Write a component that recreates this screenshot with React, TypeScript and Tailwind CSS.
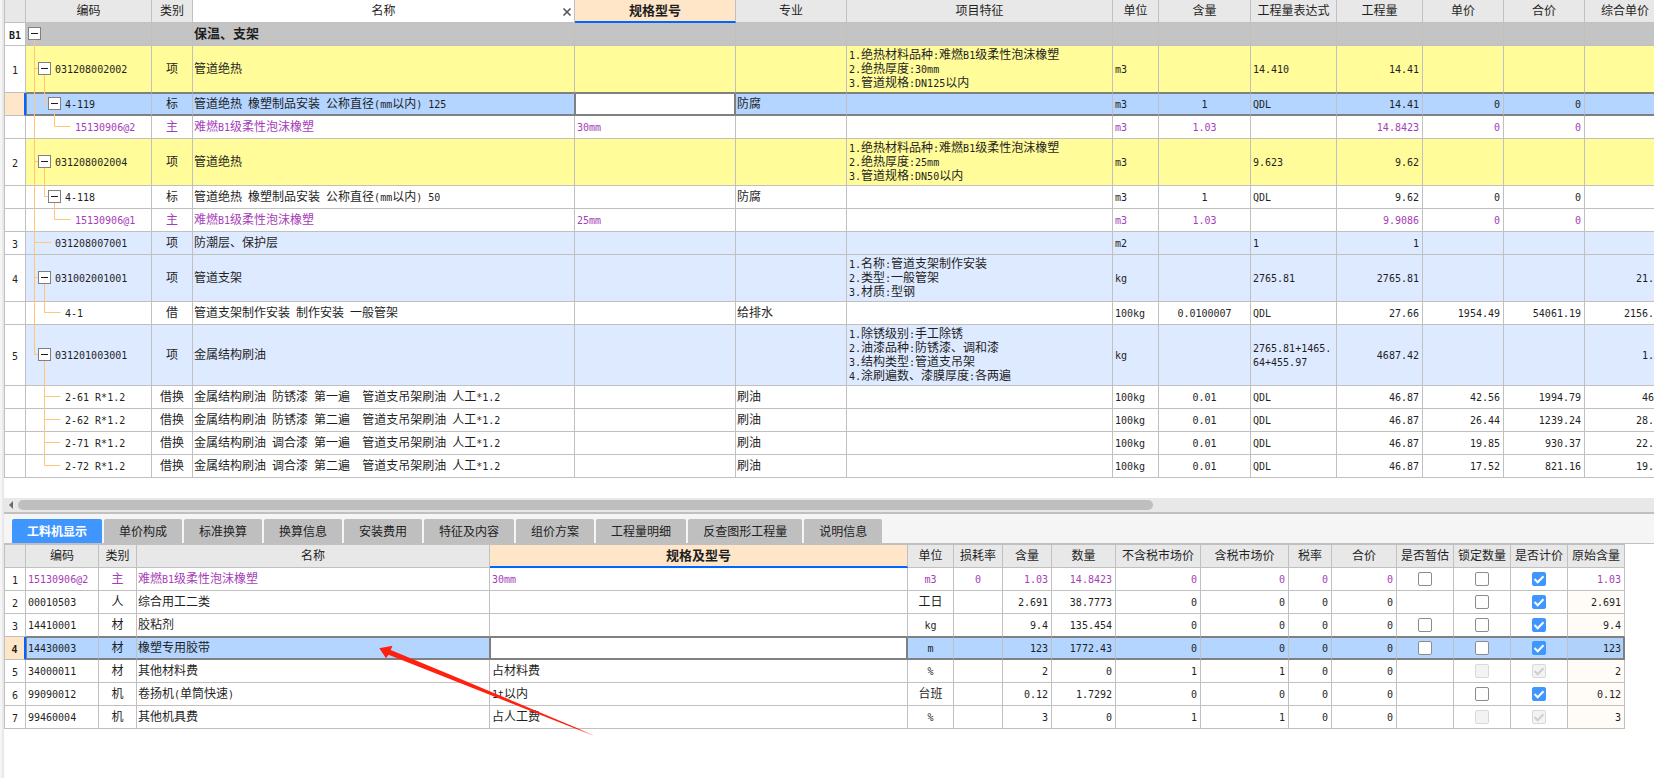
import { ReactNode, useState } from "react";

const HAN = "font-['Noto_Sans_CJK_SC',sans-serif]";
const LATIN = "font-['DejaVu_Sans_Mono','Noto_Sans_CJK_SC',monospace] text-[10px] leading-none";

/** Sets Latin runs in a half-width face next to full-width Han characters. */
function Mixed({ text }: { text: string }) {
  return (
    <>
      {text.split(/([\x20-\x7e]+)/).map((part, i) =>
        i % 2 === 1 ? (
          <span key={i} className={LATIN}>
            {part}
          </span>
        ) : (
          part
        ),
      )}
    </>
  );
}

type Tone = "section" | "yellow" | "blue" | "plain" | "selected";

interface Item {
  no: string;
  tone: Tone;
  level: 0 | 1 | 2 | 3;
  open?: boolean;
  /** Vertical connectors that pass through or end in this row. */
  through?: number[];
  last?: boolean;
  code: string;
  kind: string;
  name: string;
  spec?: string;
  trade?: string;
  feature?: string[];
  unit?: string;
  content?: string;
  expr?: string[];
  qty?: string;
  price?: string;
  total?: string;
  full?: string;
  material?: boolean;
}

const ITEMS: Item[] = [
  { no: "B1", tone: "section", level: 0, open: true, code: "", kind: "", name: "保温、支架" },
  {
    no: "1", tone: "yellow", level: 1, open: true, code: "031208002002", kind: "项", name: "管道绝热",
    feature: ["1.绝热材料品种:难燃B1级柔性泡沫橡塑", "2.绝热厚度:30mm", "3.管道规格:DN125以内"],
    unit: "m3", expr: ["14.410"], qty: "14.41",
  },
  {
    no: "", tone: "selected", level: 2, open: true, last: true, through: [0], code: "4-119", kind: "标",
    name: "管道绝热 橡塑制品安装 公称直径(mm以内) 125", trade: "防腐", unit: "m3", content: "1", expr: ["QDL"],
    qty: "14.41", price: "0", total: "0",
  },
  {
    no: "", tone: "plain", level: 3, last: true, through: [0], code: "15130906@2", kind: "主", name: "难燃B1级柔性泡沫橡塑",
    spec: "30mm", unit: "m3", content: "1.03", qty: "14.8423", price: "0", total: "0", material: true,
  },
  {
    no: "2", tone: "yellow", level: 1, open: true, code: "031208002004", kind: "项", name: "管道绝热",
    feature: ["1.绝热材料品种:难燃B1级柔性泡沫橡塑", "2.绝热厚度:25mm", "3.管道规格:DN50以内"],
    unit: "m3", expr: ["9.623"], qty: "9.62",
  },
  {
    no: "", tone: "plain", level: 2, open: true, last: true, through: [0], code: "4-118", kind: "标",
    name: "管道绝热 橡塑制品安装 公称直径(mm以内) 50", trade: "防腐", unit: "m3", content: "1", expr: ["QDL"],
    qty: "9.62", price: "0", total: "0",
  },
  {
    no: "", tone: "plain", level: 3, last: true, through: [0], code: "15130906@1", kind: "主", name: "难燃B1级柔性泡沫橡塑",
    spec: "25mm", unit: "m3", content: "1.03", qty: "9.9086", price: "0", total: "0", material: true,
  },
  { no: "3", tone: "blue", level: 1, code: "031208007001", kind: "项", name: "防潮层、保护层", unit: "m2", expr: ["1"], qty: "1" },
  {
    no: "4", tone: "blue", level: 1, open: true, code: "031002001001", kind: "项", name: "管道支架",
    feature: ["1.名称:管道支架制作安装", "2.类型:一般管架", "3.材质:型钢"],
    unit: "kg", expr: ["2765.81"], qty: "2765.81", full: "21.",
  },
  {
    no: "", tone: "plain", level: 2, last: true, through: [0], code: "4-1", kind: "借", name: "管道支架制作安装 制作安装 一般管架",
    trade: "给排水", unit: "100kg", content: "0.0100007", expr: ["QDL"], qty: "27.66", price: "1954.49", total: "54061.19", full: "2156.",
  },
  {
    no: "5", tone: "blue", level: 1, open: true, last: true, code: "031201003001", kind: "项", name: "金属结构刷油",
    feature: ["1.除锈级别:手工除锈", "2.油漆品种:防锈漆、调和漆", "3.结构类型:管道支吊架", "4.涂刷遍数、漆膜厚度:各两遍"],
    unit: "kg", expr: ["2765.81+1465.", "64+455.97"], qty: "4687.42", full: "1.",
  },
  {
    no: "", tone: "plain", level: 2, code: "2-61 R*1.2", kind: "借换", name: "金属结构刷油 防锈漆 第一遍  管道支吊架刷油 人工*1.2",
    trade: "刷油", unit: "100kg", content: "0.01", expr: ["QDL"], qty: "46.87", price: "42.56", total: "1994.79", full: "46",
  },
  {
    no: "", tone: "plain", level: 2, code: "2-62 R*1.2", kind: "借换", name: "金属结构刷油 防锈漆 第二遍  管道支吊架刷油 人工*1.2",
    trade: "刷油", unit: "100kg", content: "0.01", expr: ["QDL"], qty: "46.87", price: "26.44", total: "1239.24", full: "28.",
  },
  {
    no: "", tone: "plain", level: 2, code: "2-71 R*1.2", kind: "借换", name: "金属结构刷油 调合漆 第一遍  管道支吊架刷油 人工*1.2",
    trade: "刷油", unit: "100kg", content: "0.01", expr: ["QDL"], qty: "46.87", price: "19.85", total: "930.37", full: "22.",
  },
  {
    no: "", tone: "plain", level: 2, last: true, code: "2-72 R*1.2", kind: "借换", name: "金属结构刷油 调合漆 第二遍  管道支吊架刷油 人工*1.2",
    trade: "刷油", unit: "100kg", content: "0.01", expr: ["QDL"], qty: "46.87", price: "17.52", total: "821.16", full: "19.",
  },
];

const TONES: Record<Tone, string> = {
  section: "bg-[#c4c4c4] font-bold",
  yellow: "bg-[#fffc99]",
  blue: "bg-[#deeaff]",
  plain: "bg-white",
  selected: "bg-[#b3d5ff]",
};

const INDENT = ["pl-[2px]", "pl-[12px]", "pl-[22px]", "pl-[32px]"];
const LEAF_INDENT = ["pl-[2px]", "pl-[29px]", "pl-[39px]", "pl-[49px]"];

function TreeLines({ item, height }: { item: Item; height: number }) {
  const mid = Math.floor((height - 2) / 2) + 0.5;
  const x = item.level * 10 - 2 + 0.5;
  return (
    <svg
      className={`pointer-events-none absolute ${item.tone === "selected" ? "-left-px -top-px" : "left-0 top-0"}`}
      width="60"
      height={height}
      stroke="#ffc67a"
      fill="none"
      aria-hidden="true"
    >
      {item.through?.map((t) => (
        <path key={t} d={`M${t * 10 + 8.5} 0V${height}`} />
      ))}
      {item.level > 0 && <path d={`M${x} 0V${item.last ? mid : height}M${x} ${mid}h${item.open ? 4 : 16}`} />}
      {item.open && <path d={`M${x + 10} ${mid}V${height}`} />}
    </svg>
  );
}

function TreeCell({ item }: { item: Item }) {
  const lines = item.feature?.length ?? 1;
  const height = lines === 4 ? 61 : lines === 3 ? 47 : 23;
  return (
    <div
      className={`flex items-center whitespace-pre ${item.open ? INDENT[item.level] : LEAF_INDENT[item.level]} ${
        item.tone === "selected" ? "-ml-px" : ""
      }`}
    >
      <TreeLines item={item} height={height} />
      {item.open && (
        <button type="button" aria-label="折叠" className="relative mr-[4px] size-[13px] shrink-0 border border-[#808080] bg-white">
          <svg viewBox="0 0 11 11" className="block size-[11px]" aria-hidden="true">
            <path d="M2 5h7v1H2z" fill="#1f1f1f" />
          </svg>
        </button>
      )}
      <span>
        <Mixed text={item.code} />
      </span>
    </div>
  );
}

const EDGE = "border-r border-[#c0c0c0]";
const HEAD = "border-r border-b border-[#c0c0c0] bg-[#e8e8e8] p-0 pb-[2px] text-center font-normal";
const HEAD_ACTIVE = "border-r border-b-2 border-r-[#c0c0c0] border-b-[#0066ff] bg-[#ffe6c8] p-0 pb-[2px] text-center text-[13px] font-bold";

function edges(selected: boolean, beforeSelected: boolean) {
  if (selected) return "border-t border-b-2 border-y-[#808080]";
  return beforeSelected ? "border-b border-b-[#808080]" : "border-b border-b-[#c0c0c0]";
}

function QuotaTable() {
  return (
    <table className="w-full table-fixed border-separate border-spacing-0 border-l border-[#c0c0c0]">
      <colgroup>
        <col className="w-[21px]" />
        <col className="w-[126px]" />
        <col className="w-[41px]" />
        <col className="w-[382px]" />
        <col className="w-[161px]" />
        <col className="w-[111px]" />
        <col className="w-[266px]" />
        <col className="w-[46px]" />
        <col className="w-[92px]" />
        <col className="w-[86px]" />
        <col className="w-[86px]" />
        <col className="w-[81px]" />
        <col className="w-[81px]" />
        <col />
      </colgroup>
      <thead>
        <tr className="h-[23px]">
          <th className={HEAD} aria-label="序号" />
          <th className={HEAD}>编码</th>
          <th className={HEAD}>类别</th>
          <th className="relative border-r border-b border-[#c0c0c0] bg-white p-0 pb-[2px] text-center font-normal">
            名称
            <button type="button" aria-label="清除" className="absolute right-[2px] top-[7px] size-[10px]">
              <svg viewBox="0 0 10 10" className="block" stroke="#555" strokeWidth="1.6" aria-hidden="true">
                <path d="M1.5 1.5l7 7M8.500 1.500l-7 7" />
              </svg>
            </button>
          </th>
          <th className={HEAD_ACTIVE}>规格型号</th>
          <th className={HEAD}>专业</th>
          <th className={HEAD}>项目特征</th>
          <th className={HEAD}>单位</th>
          <th className={HEAD}>含量</th>
          <th className={HEAD}>工程量表达式</th>
          <th className={HEAD}>工程量</th>
          <th className={HEAD}>单价</th>
          <th className={HEAD}>合价</th>
          <th className="border-b border-[#c0c0c0] bg-[#e8e8e8] p-0 pb-[2px] pl-4 text-left font-normal">综合单价</th>
        </tr>
      </thead>
      <tbody>
        {ITEMS.map((item, i) => {
          const sel = item.tone === "selected";
          const y = edges(sel, ITEMS[i + 1]?.tone === "selected");
          const base = `${EDGE} ${y} p-0 pb-[2px]`;
          const lines = item.feature?.length ?? 1;
          const h = lines === 4 ? "h-[61px]" : lines === 3 ? "h-[47px]" : "h-[23px]";
          return (
            <tr key={i} className={`${h} ${TONES[item.tone]} ${item.material ? "text-[#a63db8]" : ""}`}>
              <th
                scope="row"
                className={`border-b border-b-[#c0c0c0] p-0 text-center ${
                  sel ? "border-r-2 border-r-[#0066ff] bg-[#ffe6c8]" : "border-r border-r-[#c0c0c0] bg-white"
                } ${item.tone === "section" ? "font-bold" : "font-normal"}`}
              >
                <Mixed text={item.no} />
              </th>
              <td className={`${base} relative ${sel ? "border-l border-l-[#808080]" : ""}`}>
                <TreeCell item={item} />
              </td>
              <td className={`${base} text-center`}>{item.kind}</td>
              <td className={`${base} whitespace-pre pl-px ${item.tone === "section" ? "text-[13px]" : ""} ${sel ? "border-r-[#808080]" : ""}`}>
                <Mixed text={item.name} />
              </td>
              {sel ? (
                <td className={`${y} border-l border-r-2 border-x-[#808080] bg-white p-0`}>
                  <input aria-label="规格型号" className="block h-[20px] w-full bg-white px-[2px] outline-none" />
                </td>
              ) : (
                <td className={`${base} pl-[2px]`}>
                  <Mixed text={item.spec ?? ""} />
                </td>
              )}
              <td className={`${base} pl-px`}>{item.trade}</td>
              <td className={`${base} pl-[2px]`}>
                {item.feature?.map((f) => (
                  <div key={f} className="h-[14px] leading-[14px]">
                    <Mixed text={f} />
                  </div>
                ))}
              </td>
              <td className={`${base} pl-[2px]`}>
                <Mixed text={item.unit ?? ""} />
              </td>
              <td className={`${base} text-center`}>
                <Mixed text={item.content ?? ""} />
              </td>
              <td className={`${base} pl-[2px]`}>
                {item.expr?.map((e) => (
                  <div key={e} className="h-[14px] leading-[14px]">
                    <Mixed text={e} />
                  </div>
                ))}
              </td>
              <td className={`${base} pr-[3px] text-right`}>
                <Mixed text={item.qty ?? ""} />
              </td>
              <td className={`${base} pr-[3px] text-right`}>
                <Mixed text={item.price ?? ""} />
              </td>
              <td className={`${base} pr-[3px] text-right`}>
                <Mixed text={item.total ?? ""} />
              </td>
              <td className={`${y} p-0 pb-[2px] text-right`}>
                <Mixed text={item.full ?? ""} />
              </td>
            </tr>
          );
        })}
      </tbody>
    </table>
  );
}

type Tick = "none" | "off" | "on" | "off-locked" | "on-locked";

function Check({ state, label }: { state: Tick; label: string }) {
  const [on, setOn] = useState(state.startsWith("on"));
  if (state === "none") return null;
  const locked = state.endsWith("locked");
  return (
    <label className="mx-auto grid size-[14px]">
      <input
        type="checkbox"
        aria-label={label}
        checked={on}
        disabled={locked}
        onChange={(e) => setOn(e.target.checked)}
        className="col-start-1 row-start-1 m-0 size-[14px] appearance-none rounded-[2px] border border-[#8c8c8c] bg-white checked:border-[#4096ff] checked:bg-[#4096ff] disabled:border-[#d9d9d9] disabled:bg-[#f3f3f3]"
      />
      {on && (
        <svg
          viewBox="0 0 14 14"
          className={`pointer-events-none z-10 col-start-1 row-start-1 size-[14px] ${locked ? "text-[#cfcfcf]" : "text-white"}`}
          fill="none"
          stroke="currentColor"
          strokeWidth="2"
          aria-hidden="true"
        >
          <path d="M2.500 7l3.200 3.200L11.500 4.200" />
        </svg>
      )}
    </label>
  );
}

interface Resource {
  code: string;
  kind: string;
  name: string;
  spec: string;
  unit: string;
  loss: string;
  nums: string[];
  ticks: [Tick, Tick, Tick];
  origin: string;
}

const RESOURCES: Resource[] = [
  { code: "15130906@2", kind: "主", name: "难燃B1级柔性泡沫橡塑", spec: "30mm", unit: "m3", loss: "0", nums: ["1.03", "14.8423", "0", "0", "0", "0"], ticks: ["off", "off", "on"], origin: "1.03" },
  { code: "00010503", kind: "人", name: "综合用工二类", spec: "", unit: "工日", loss: "", nums: ["2.691", "38.7773", "0", "0", "0", "0"], ticks: ["none", "off", "on"], origin: "2.691" },
  { code: "14410001", kind: "材", name: "胶粘剂", spec: "", unit: "kg", loss: "", nums: ["9.4", "135.454", "0", "0", "0", "0"], ticks: ["off", "off", "on"], origin: "9.4" },
  { code: "14430003", kind: "材", name: "橡塑专用胶带", spec: "", unit: "m", loss: "", nums: ["123", "1772.43", "0", "0", "0", "0"], ticks: ["off", "off", "on"], origin: "123" },
  { code: "34000011", kind: "材", name: "其他材料费", spec: "占材料费", unit: "%", loss: "", nums: ["2", "0", "1", "1", "0", "0"], ticks: ["none", "off-locked", "on-locked"], origin: "2" },
  { code: "99090012", kind: "机", name: "卷扬机(单筒快速)", spec: "1t以内", unit: "台班", loss: "", nums: ["0.12", "1.7292", "0", "0", "0", "0"], ticks: ["none", "off", "on"], origin: "0.12" },
  { code: "99460004", kind: "机", name: "其他机具费", spec: "占人工费", unit: "%", loss: "", nums: ["3", "0", "1", "1", "0", "0"], ticks: ["none", "off-locked", "on-locked"], origin: "3" },
];

const SELECTED_RESOURCE = 3;
const TICK_LABELS = ["是否暂估", "锁定数量", "是否计价"];

function Head({ children }: { children: ReactNode }) {
  return <th className={`${HEAD} whitespace-nowrap`}>{children}</th>;
}

function ResourceTable() {
  return (
    <table className="w-full table-fixed border-separate border-spacing-0 border-l border-t border-[#c0c0c0]">
      <colgroup>
        <col className="w-[21px]" />
        <col className="w-[73px]" />
        <col className="w-[38px]" />
        <col className="w-[353px]" />
        <col />
        <col className="w-[46px]" />
        <col className="w-[49px]" />
        <col className="w-[49px]" />
        <col className="w-[64px]" />
        <col className="w-[85px]" />
        <col className="w-[88px]" />
        <col className="w-[43px]" />
        <col className="w-[65px]" />
        <col className="w-[57px]" />
        <col className="w-[57px]" />
        <col className="w-[57px]" />
        <col className="w-[57px]" />
      </colgroup>
      <thead>
        <tr className="h-[23px]">
          <th className={HEAD} aria-label="序号" />
          <Head>编码</Head>
          <Head>类别</Head>
          <Head>名称</Head>
          <th className={HEAD_ACTIVE}>规格及型号</th>
          <Head>单位</Head>
          <Head>损耗率</Head>
          <Head>含量</Head>
          <Head>数量</Head>
          <Head>不含税市场价</Head>
          <Head>含税市场价</Head>
          <Head>税率</Head>
          <Head>合价</Head>
          {TICK_LABELS.map((l) => (
            <Head key={l}>{l}</Head>
          ))}
          <Head>原始含量</Head>
        </tr>
      </thead>
      <tbody>
        {RESOURCES.map((r, i) => {
          const sel = i === SELECTED_RESOURCE;
          const y = edges(sel, i + 1 === SELECTED_RESOURCE);
          const base = `${EDGE} ${y} p-0 pb-[2px]`;
          return (
            <tr key={r.code} className={`h-[23px] ${sel ? "bg-[#b3d5ff]" : "bg-white"} ${i === 0 ? "text-[#a63db8]" : ""}`}>
              <th
                scope="row"
                className={`border-b border-b-[#c0c0c0] p-0 text-center text-[#1f1f1f] ${
                  sel ? "border-r-2 border-r-[#0066ff] bg-[#ffe6c8] font-bold" : "border-r border-r-[#c0c0c0] font-normal"
                }`}
              >
                <Mixed text={String(i + 1)} />
              </th>
              <td className={`${base} ${sel ? "border-l border-l-[#808080] pl-px" : "pl-[2px]"}`}>
                <Mixed text={r.code} />
              </td>
              <td className={`${base} text-center`}>{r.kind}</td>
              <td className={`${base} pl-px ${sel ? "border-r-[#808080]" : ""}`}>
                <Mixed text={r.name} />
              </td>
              {sel ? (
                <td className={`${y} border-l border-r-2 border-x-[#808080] bg-white p-0`}>
                  <input aria-label="规格及型号" className="block h-[20px] w-full bg-white px-[2px] outline-none" />
                </td>
              ) : (
                <td className={`${base} pl-[2px]`}>
                  <Mixed text={r.spec} />
                </td>
              )}
              <td className={`${base} text-center`}>
                <Mixed text={r.unit} />
              </td>
              <td className={`${base} text-center`}>
                <Mixed text={r.loss} />
              </td>
              {r.nums.map((n, k) => (
                <td key={k} className={`${base} pr-[3px] text-right`}>
                  <Mixed text={n} />
                </td>
              ))}
              {r.ticks.map((t, k) => (
                <td key={k} className={`${EDGE} ${y} p-0`}>
                  <Check state={t} label={TICK_LABELS[k]} />
                </td>
              ))}
              <td
                className={`${y} p-0 pb-[2px] text-right ${
                  sel
                    ? "border-r-2 border-r-[#808080] bg-[#b0d1fa] pr-[2px]"
                    : `border-r border-r-[#c0c0c0] pr-[3px] ${i > 0 ? "bg-[#fffcf7]" : ""}`
                }`}
              >
                <Mixed text={r.origin} />
              </td>
            </tr>
          );
        })}
      </tbody>
    </table>
  );
}

const TABS = ["工料机显示", "单价构成", "标准换算", "换算信息", "安装费用", "特征及内容", "组价方案", "工程量明细", "反查图形工程量", "说明信息"];

function Tabs() {
  const [active, setActive] = useState(0);
  return (
    <div role="tablist" className="flex gap-[2px] border-b border-[#c0c0c0] bg-[#f5f5f5] pl-2 pt-[5px]">
      {TABS.map((t, i) => (
        <button
          key={t}
          type="button"
          role="tab"
          aria-selected={i === active}
          onClick={() => setActive(i)}
          className={`h-6 whitespace-nowrap rounded-t-[2px] px-[15px] ${
            i === active ? "bg-[#4096ff] font-bold text-white" : "bg-[#bfbfbf] text-[#222]"
          }`}
        >
          {t}
        </button>
      ))}
    </div>
  );
}

function Pointer() {
  return (
    <svg className="pointer-events-none absolute left-[375px] top-[100px]" width="220" height="94" aria-hidden="true">
      <defs>
        <linearGradient id="fade" x1="0" y1="0" x2="1" y2="0">
          <stop offset="0.92" stopColor="#ff2010" />
          <stop offset="1" stopColor="#ff2010" stopOpacity="0.2" />
        </linearGradient>
      </defs>
      <path d="M0.300 4.300L13.500 1.800L11.700 6L81 34.800L214 90.800L213.800 91.600L81 39L9.500 10.800L7 14.300Z" fill="url(#fade)" />
    </svg>
  );
}

export default function App() {
  return (
    <div className={`min-h-screen border-l-2 border-[#f5f5f5] bg-white text-[12px] leading-[16px] text-[#1f1f1f] ${HAN}`}>
      <div className="min-h-screen border-l-2 border-[#e8e8e8]">
        <section className="overflow-hidden">
          <QuotaTable />
        </section>
        <div className="mt-5 flex h-[14px] items-center bg-[#e8e8e8] pl-[5px]">
          <button type="button" aria-label="向左滚动" className="mr-[5px] shrink-0">
            <svg width="4" height="8" className="block" aria-hidden="true">
              <path d="M4 0v8L0 4z" fill="#6b6b6b" />
            </svg>
          </button>
          <div className="h-[10px] w-[69%] rounded-full bg-[#bfbfbf]" />
        </div>
        <div className="h-[2px] bg-[#c0c0c0]" />
        <Tabs />
        <section className="relative mr-[29px]">
          <ResourceTable />
          <Pointer />
        </section>
      </div>
    </div>
  );
}
